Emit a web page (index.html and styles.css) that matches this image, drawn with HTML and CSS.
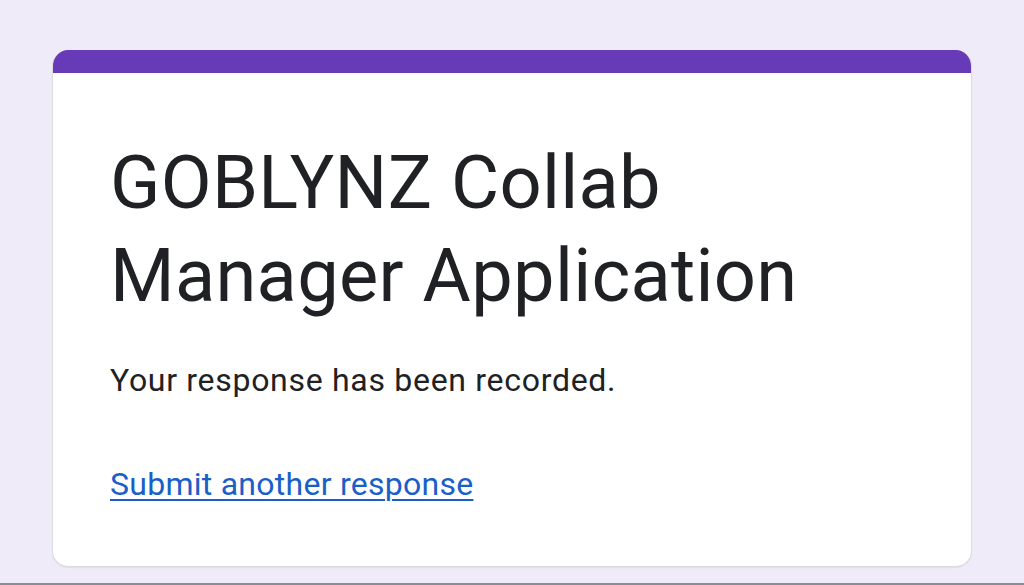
FILE: index.html
```html
<!DOCTYPE html>
<html>
<head>
<meta charset="utf-8">
<link rel="stylesheet" href="styles.css">
</head>
<body>
<div class="page">
  <div class="content">
    <div class="card">
      <div class="card-top"></div>
      <div class="card-body">
        <h1 class="title">GOBLYNZ Collab Manager Application</h1>
        <p class="message">Your response has been recorded.</p>
        <a class="link" href="#">Submit another response</a>
      </div>
    </div>
  </div>
  <div class="bottom-line"></div>
</div>
</body>
</html>
```
FILE: styles.css
```css
html, body {
  margin: 0;
  padding: 0;
  background: #efebf8;
}
.page {
  height: 585px;
  display: flex;
  flex-direction: column;
  font-family: Roboto, "Liberation Sans", sans-serif;
}
.content {
  padding: 50px 52px 0 52px;
}
.card {
  height: 517px;
  box-sizing: border-box;
  background: #ffffff;
  border: 1px solid #dadce0;
  border-top: none;
  border-radius: 16px;
  box-shadow: 0 1px 1px rgba(60, 64, 67, 0.08);
  overflow: hidden;
  display: flex;
  flex-direction: column;
}
.card-top {
  height: 23px;
  background: #673ab7;
  flex: none;
}
.card-body {
  padding: 0 57px;
  display: flex;
  flex-direction: column;
  align-items: flex-start;
}
.title {
  margin: 63px 0 0 0;
  font-weight: 400;
  font-size: 74px;
  line-height: 93px;
  color: #202124;
  letter-spacing: 0.3px;
}
.message {
  margin: 38px 0 0 0;
  font-size: 32px;
  line-height: 40px;
  color: #202124;
  letter-spacing: 0.7px;
}
.link {
  margin-top: 64px;
  font-size: 32px;
  line-height: 40px;
  color: #1a5fc8;
  letter-spacing: 0.26px;
  text-decoration: underline;
  text-decoration-thickness: 2px;
  text-underline-offset: 4px;
}
.bottom-line {
  margin-top: auto;
  height: 2px;
  background: #8e8c93;
}
```
